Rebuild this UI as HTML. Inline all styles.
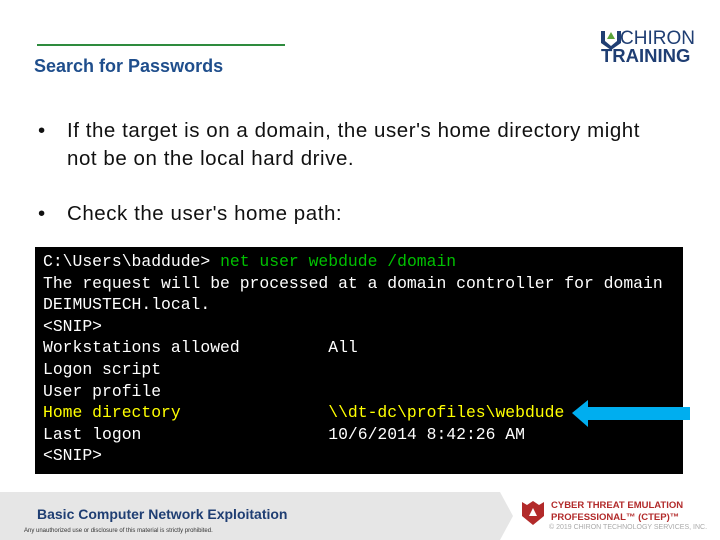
<!DOCTYPE html>
<html><head><style>
body{margin:0;width:720px;height:540px;position:relative;background:#fff;font-family:"Liberation Sans",sans-serif;overflow:hidden}
.a{position:absolute}
.t{font-family:"Liberation Mono",monospace;font-size:16.4px;line-height:21.6px;color:#fff;white-space:pre}
.y{color:#ffff00}.g{color:#00c000}
.b{font-size:20.5px;line-height:28px;color:#111;letter-spacing:0.55px;white-space:nowrap}
</style></head><body>
<div class="a" style="left:37px;top:44px;width:248px;height:2px;background:#2e8b3e"></div>
<div class="a" style="left:34px;top:56px;font-size:18px;font-weight:bold;color:#1f4e8c">Search for Passwords</div>
<div class="a" style="left:600px;top:28px;font-size:19px;color:#1f3e73"><span style="display:inline-block;width:20px"></span>CHIRON</div>
<svg class="a" style="left:600px;top:30px" width="22" height="20"><path d="M1 1h4v10l6 5 6-5V1h4v12l-10 7-10-7z" fill="#1f3e73"/><path d="M11 2l4 7h-8z" fill="#5aa33a"/></svg>
<div class="a" style="left:601px;top:45px;font-size:18.5px;font-weight:bold;color:#1f3e73">TRAINING</div>
<div class="a b" style="left:38px;top:117px">•</div>
<div class="a b" style="left:67px;top:117px">If the target is on a domain, the user's home directory might<br>not be on the local hard drive.</div>
<div class="a b" style="left:38px;top:200px">•</div>
<div class="a b" style="left:67px;top:200px">Check the user's home path:</div>
<div class="a" style="left:35px;top:247px;width:648px;height:227px;background:#000"></div>
<div class="a t" style="left:43px;top:251px">C:\Users\baddude&gt; <span class="g">net user webdude /domain</span>
The request will be processed at a domain controller for domain
DEIMUSTECH.local.
&lt;SNIP&gt;
Workstations allowed         All
Logon script
User profile
<span class="y">Home directory               \\dt-dc\profiles\webdude</span>
Last logon                   10/6/2014 8:42:26 AM
&lt;SNIP&gt;</div>
<svg class="a" style="left:570px;top:398px" width="122" height="30"><path d="M2 15L18 2v7h102v13H18v7z" fill="#00aeef"/></svg>
<svg class="a" style="left:0;top:492px" width="515" height="48"><path d="M0 0H500L513 24L500 48H0z" fill="#e6e6e6"/></svg>
<div class="a" style="left:37px;top:506px;font-size:14px;font-weight:bold;color:#1f3e73">Basic Computer Network Exploitation</div>
<div class="a" style="left:24px;top:528px;font-size:6px;color:#333">Any unauthorized use or disclosure of this material is strictly prohibited.</div>
<svg class="a" style="left:521px;top:500px" width="24" height="26"><path d="M1 2l5 3 6-4 6 4 5-3v14l-11 9-11-9z" fill="#b22a2a"/><path d="M12 8l4 8h-8z" fill="#fff"/></svg>
<div class="a" style="left:551px;top:500px;font-size:9.5px;line-height:12px;font-weight:bold;color:#b22a2a">CYBER THREAT EMULATION<br>PROFESSIONAL™ (CTEP)™</div>
<div class="a" style="left:549px;top:524px;font-size:7px;color:#aaa">© 2019 CHIRON TECHNOLOGY SERVICES, INC.</div>
</body></html>
